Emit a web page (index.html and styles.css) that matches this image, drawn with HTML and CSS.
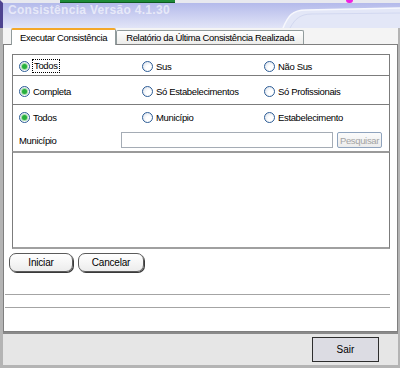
FILE: index.html
```html
<!DOCTYPE html>
<html lang="pt-BR">
<head>
    <meta charset="UTF-8">
    <title>Consistência Versão 4.1.30</title>
    <link rel="stylesheet" href="styles.css">
</head>
<body>
    <div class="window">
        <div class="titlebar">
            <span class="strip-green"></span>
            <span class="strip-dot"></span>
            <span class="title">Consistência Versão 4.1.30</span>
            <svg class="swoosh" width="400" height="28" viewBox="0 0 400 28">
                <path d="M283 28 C288 16 292 10 306 10 L400 8 L400 28 Z" fill="#e3e7f7"/>
                <path d="M283 28 C288 16 292 10 306 10 L400 8" fill="none" stroke="#f7f8fd" stroke-width="1.5"/>
                <path d="M290 28 C295 19 300 14 312 14 L400 13" fill="none" stroke="#d2d8f0" stroke-width="1"/>
            </svg>
        </div>

        <div class="client">
            <div class="tabs">
                <div class="tab active">Executar Consistência</div>
                <div class="tab">Relatório da Última Consistência Realizada</div>
            </div>

            <div class="panel">
                <div class="box row-tipo">
                    <div class="opt"><span class="radio on"></span><span class="focus">Todos</span></div>
                    <div class="opt"><span class="radio"></span>Sus</div>
                    <div class="opt"><span class="radio"></span>Não Sus</div>
                </div>
                <div class="box row-modo">
                    <div class="opt"><span class="radio on"></span>Completa</div>
                    <div class="opt"><span class="radio"></span>Só Estabelecimentos</div>
                    <div class="opt"><span class="radio"></span>Só Profissionais</div>
                </div>
                <div class="box row-local">
                    <div class="opts">
                        <div class="opt"><span class="radio on"></span>Todos</div>
                        <div class="opt"><span class="radio"></span>Município</div>
                        <div class="opt"><span class="radio"></span>Estabelecimento</div>
                    </div>
                    <div class="field">
                        <span class="field-label">Município</span>
                        <span class="input"></span>
                        <button class="search" disabled>Pesquisar</button>
                    </div>
                </div>
                <div class="box log"></div>

                <div class="actions">
                    <button class="pill">Iniciar</button>
                    <button class="pill">Cancelar</button>
                </div>

                <div class="rule first"></div>
                <div class="rule"></div>
            </div>

            <div class="footer">
                <button class="exit">Sair</button>
            </div>
        </div>
    </div>
</body>
</html>
```

FILE: styles.css
```css
body {
    margin: 0;
    font-family: "Liberation Sans", Arial, sans-serif;
    font-size: 9.5px;
    letter-spacing: -0.35px;
    color: #000;
    background: #b4b4b4;
}
.window {
    width: 400px;
    height: 368px;
    overflow: hidden;
}
.titlebar {
    position: relative;
    height: 25px;
    border-top: 3px solid #e8e9ef;
    border-left: 3px solid #4d4390;
    background: linear-gradient(#b4baeb, #e2e5f7);
}
.strip-green {
    position: absolute;
    top: -3px;
    left: 57px;
    width: 115px;
    height: 2px;
    background: #1e8a38;
    border-bottom: 1px solid #0d5a20;
}
.strip-dot {
    position: absolute;
    top: -3px;
    left: 343px;
    width: 7px;
    height: 3px;
    border-radius: 0 0 3px 3px;
    background: #f020e0;
}
.title {
    position: absolute;
    top: 1px;
    left: 5px;
    line-height: 12px;
    color: rgba(255, 255, 255, 0.6);
    font-weight: bold;
    font-size: 12px;
    letter-spacing: 0.3px;
}
.swoosh {
    position: absolute;
    top: -3px;
    left: -3px;
}
.client {
    height: 340px;
    background: #f4f4f4;
    border-left: 3px solid #b4b4b4;
    border-right: 2px solid #b4b4b4;
}
.tabs {
    display: flex;
    align-items: flex-end;
    height: 16px;
    padding-left: 8px;
}
.tab {
    height: 13px;
    line-height: 13px;
    padding: 0 9px;
    border: 1px solid #919b9c;
    border-bottom: none;
    border-radius: 2px 2px 0 0;
    background: linear-gradient(#ffffff, #ececea);
    white-space: nowrap;
}
.tab.active {
    position: relative;
    height: 15px;
    line-height: 16px;
    margin-bottom: -1px;
    padding: 0 8px;
    border-top: 2px solid #f4a82a;
    background: #fff;
    z-index: 1;
}
.panel {
    height: 286px;
    background: #fff;
    border: 1px solid #7f7f7f;
}
.box {
    margin: -1px 7px 0 8px;
    border: 1px solid #7c7c7c;
    box-sizing: border-box;
}
.row-tipo {
    margin-top: 9px;
    height: 22px;
    display: flex;
    align-items: center;
    padding: 2px 0 0 6px;
}
.row-modo {
    height: 30px;
    display: flex;
    align-items: center;
    padding: 3px 0 0 6px;
}
.row-local {
    height: 48px;
    padding: 6px 0 0 6px;
}
.opts {
    display: flex;
    align-items: center;
    height: 13px;
}
.opt {
    display: flex;
    align-items: center;
    gap: 3px;
    width: 123px;
    height: 13px;
}
.opt:nth-child(2) {
    width: 122px;
}
.radio {
    width: 9px;
    height: 9px;
    border: 1px solid #2d5d96;
    border-radius: 50%;
    background: radial-gradient(circle at 65% 65%, #ffffff 30%, #d6dde8);
    display: flex;
    align-items: center;
    justify-content: center;
}
.radio.on::after {
    content: "";
    width: 5px;
    height: 5px;
    border-radius: 50%;
    background: #27b03c;
    box-shadow: 0 0 0 1px #a3dca9;
}
.focus {
    outline: 1px dotted #000;
    padding: 0 1px;
    line-height: 12px;
}
.field {
    display: flex;
    align-items: center;
    height: 16px;
    margin-top: 8px;
}
.field-label {
    width: 102px;
}
.input {
    width: 210px;
    height: 14px;
    border: 1px solid #a5acb5;
    background: #fff;
}
.search {
    margin-left: 4px;
    width: 45px;
    height: 16px;
    padding: 0;
    font: inherit;
    letter-spacing: -0.35px;
    color: #a3a3a3;
    background: linear-gradient(#fbfbfb, #ececec);
    border: 1px solid #8fa3bd;
    border-radius: 2px;
}
.log {
    height: 98px;
    border-width: 2px 1px 2px 1px;
    border-color: #9a9a9a #7c7c7c #a0a0a0 #7c7c7c;
}
.actions {
    display: flex;
    gap: 5px;
    margin: 4px 0 0 5px;
}
.pill {
    width: 64px;
    height: 19px;
    padding: 0;
    font: inherit;
    font-size: 10px;
    letter-spacing: -0.2px;
    color: #000;
    background: linear-gradient(#ffffff, #ececec);
    border: 1px solid #5a5a5a;
    border-radius: 7px;
    box-shadow: 1px 1px 0 #3a3a3a;
}
.pill + .pill {
    width: 66px;
}
.rule {
    margin: 12px 7px 0 1px;
    height: 1px;
    background: #a4a4a4;
}
.rule.first {
    margin-top: 22px;
}
.footer {
    height: 31px;
    border-top: 2px solid #8a8a8a;
    border-bottom: 3px solid #b4b4b4;
    background: #e6e6e6;
    display: flex;
    justify-content: flex-end;
    align-items: center;
}
.exit {
    width: 67px;
    height: 25px;
    margin-right: 19px;
    font: inherit;
    font-size: 10px;
    color: #000;
    background: #dcdce3;
    border: 1px solid #2e2e2e;
}
```
